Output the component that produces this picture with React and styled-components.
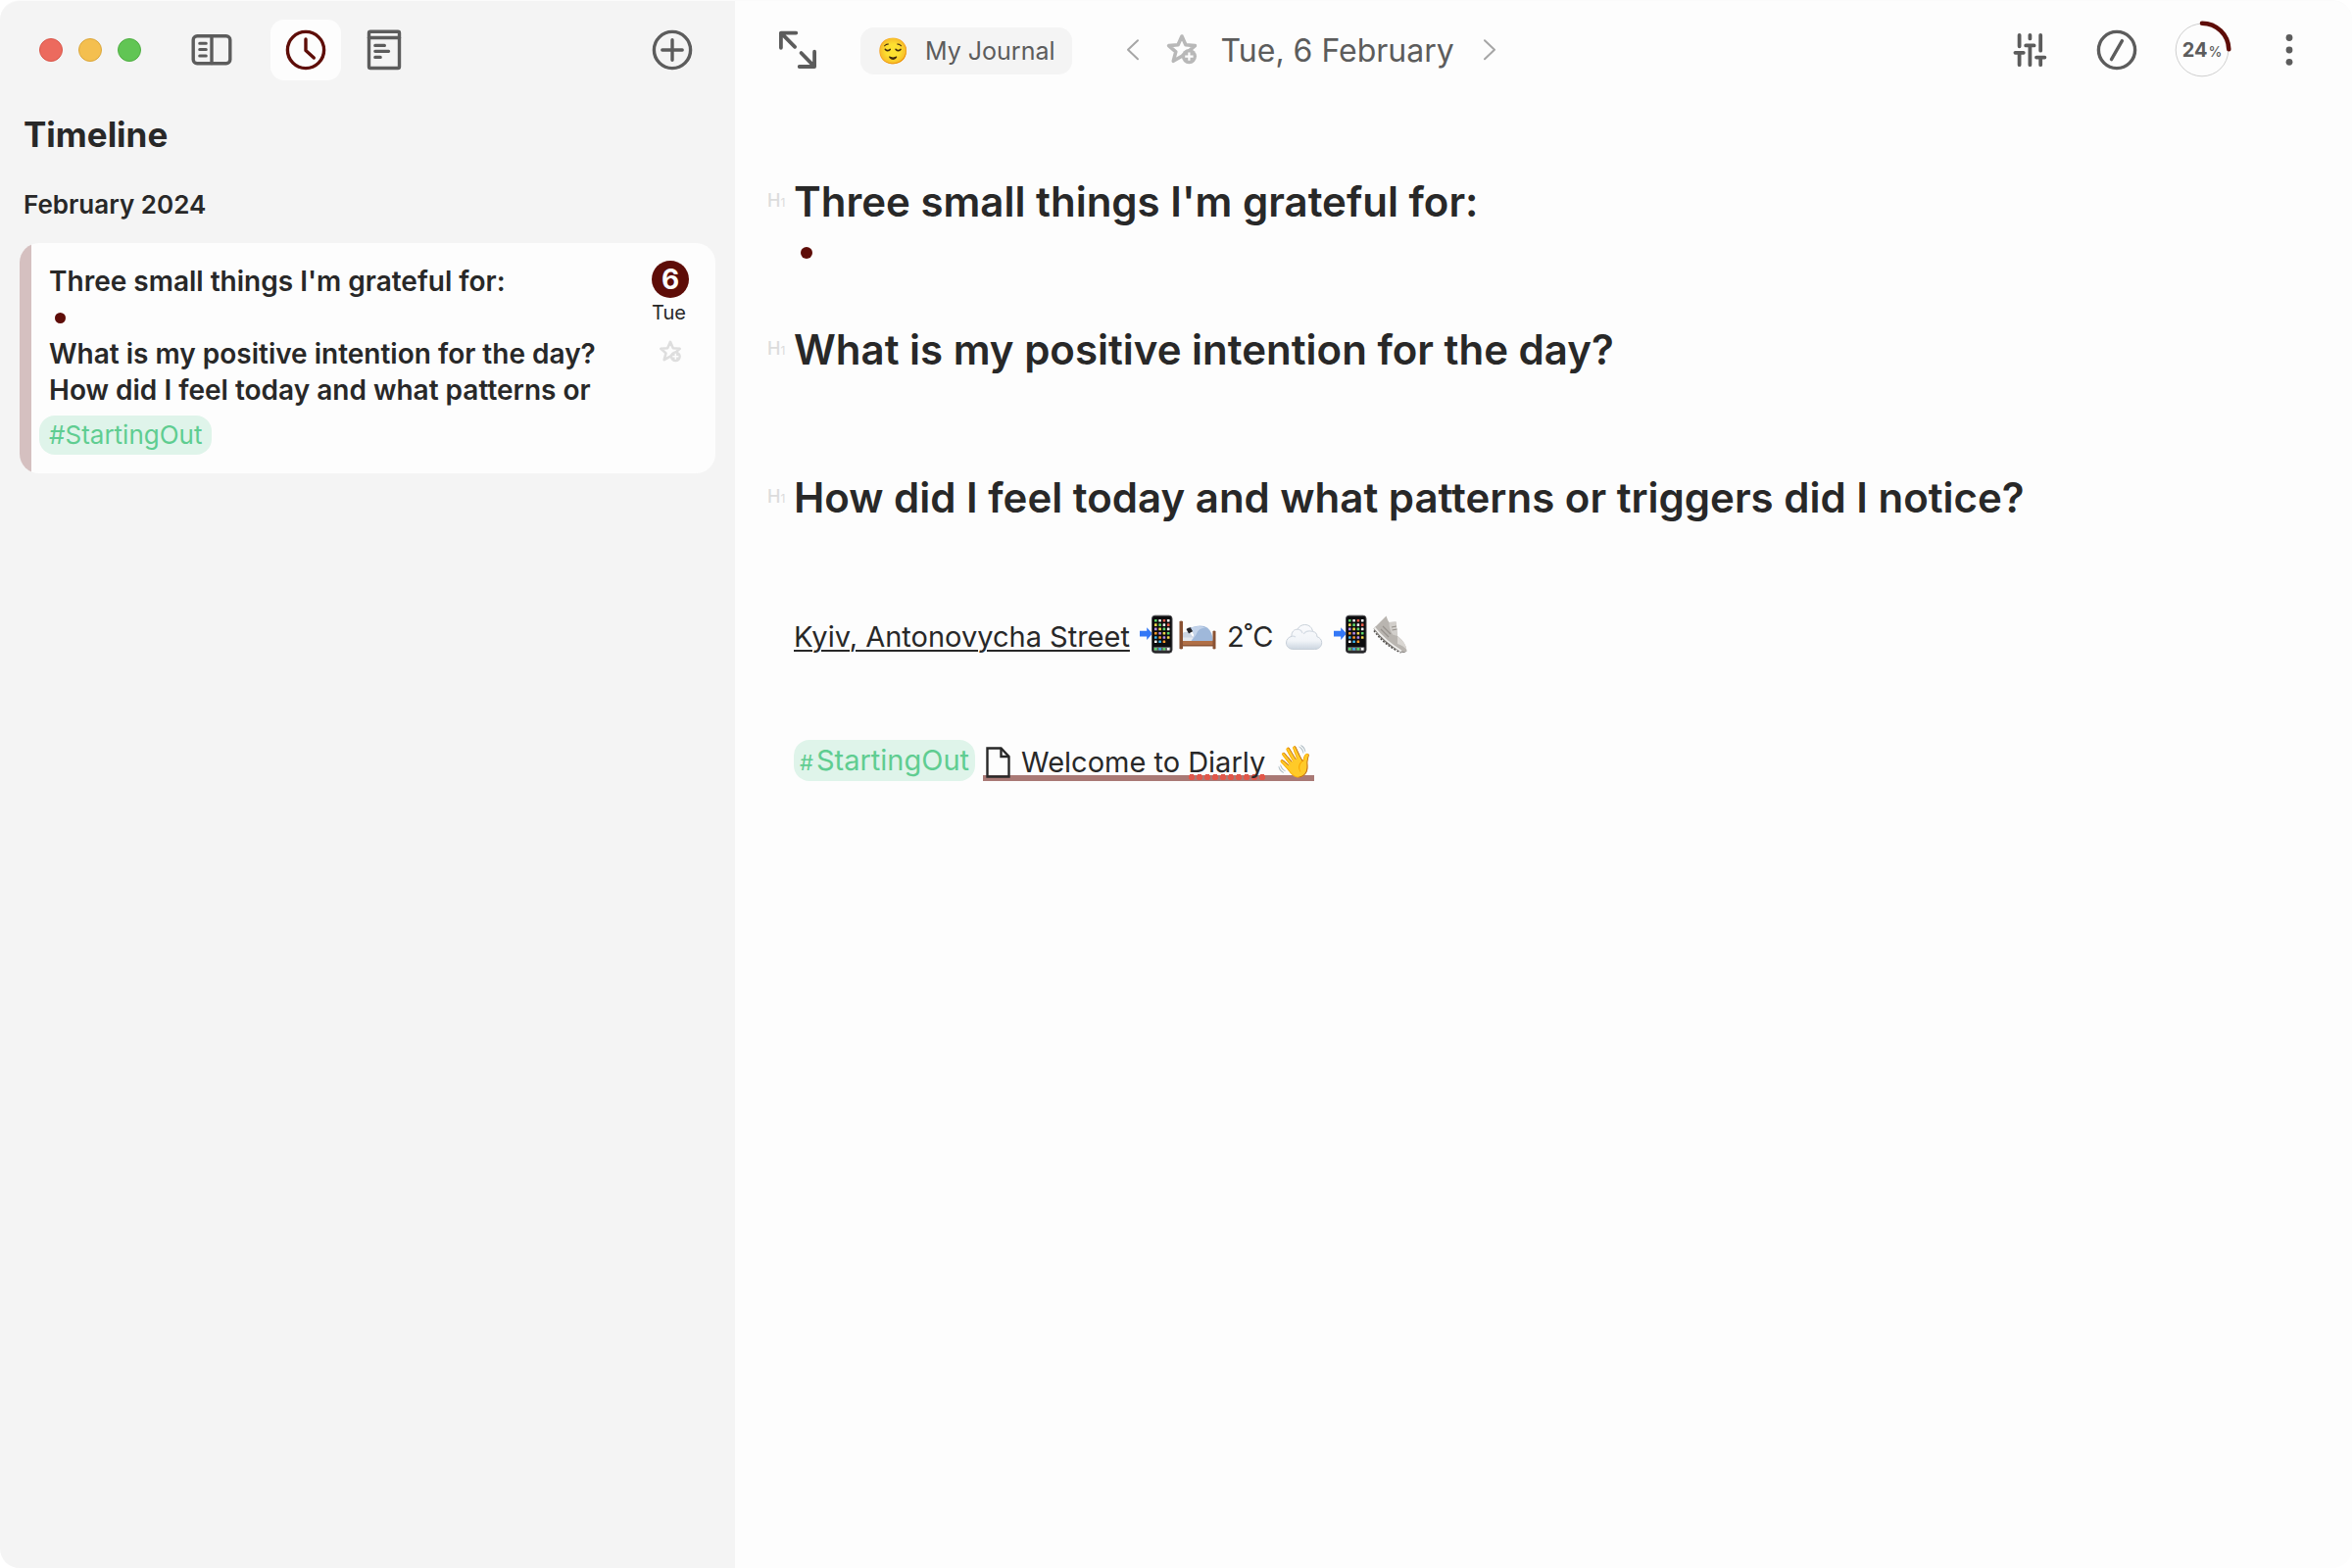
import React from "react";
import styled, { createGlobalStyle, ThemeProvider } from "styled-components";

const theme = {
  ink: "#282828",
  muted: "#5c5c5c",
  accent: "#5e0d08",
  accentSoft: "#d5c0c0",
  green: "#5fcd91",
  greenSoft: "#dff4ea",
  side: "#f4f4f4",
  paper: "#fdfdfd",
};

const GlobalStyle = createGlobalStyle`
  * { box-sizing: border-box; }
  body {
    margin: 0;
    background: #fff;
    font-family: Inter, "Liberation Sans", sans-serif;
    -webkit-font-smoothing: antialiased;
  }
  h1, h2, p { margin: 0; padding: 0; }
`;

const Window = styled.div`
  display: grid;
  grid-template-columns: 750px minmax(0, 1fr);
  min-height: 100vh;
  border-top: 1px solid #fbfbfb;
  border-radius: 20px;
  overflow: hidden;
  color: ${(p) => p.theme.ink};
  background: ${(p) => p.theme.paper};
`;

const Sidebar = styled.aside`
  background: ${(p) => p.theme.side};
`;

const Toolbar = styled.header`
  display: flex;
  align-items: center;
  height: 100px;
`;

const SideToolbar = styled(Toolbar)`
  padding: 0 43px 0 40px;
`;

const MainToolbar = styled(Toolbar)`
  padding: 0 52px 0 43px;
`;

const Spacer = styled.div`
  flex: 1;
`;

const Lights = styled.div`
  display: flex;
  gap: 16px;
  margin-right: 51px;
`;

const Light = styled.button`
  width: 24px;
  height: 24px;
  padding: 0;
  border: 1px solid ${(p) => p.$edge};
  border-radius: 50%;
  background: ${(p) => p.$fill};
`;

const IconButton = styled.button`
  display: flex;
  flex: none;
  padding: 0;
  border: 0;
  background: none;
  color: ${(p) => p.$color || p.theme.muted};
`;

const Tabs = styled.nav`
  display: flex;
  align-items: center;
  gap: 23px;
  margin-left: 39px;
`;

const TabButton = styled(IconButton)`
  align-items: center;
  justify-content: center;
  ${(p) =>
    p.$active &&
    `width: 72px; height: 62px; border-radius: 14px; background: ${p.theme.paper}; color: ${p.theme.accent};`}
`;

const Timeline = styled.section`
  padding: 14px 20px;
`;

const TimelineTitle = styled.h1`
  padding-left: 4px;
  font-size: 35px;
  font-weight: 700;
  line-height: 44px;
`;

const Month = styled.h2`
  margin: 32px 0 21px;
  padding-left: 4px;
  font-size: 26px;
  font-weight: 600;
  line-height: 36px;
`;

const Card = styled.article`
  display: flex;
  justify-content: space-between;
  padding: 18px 27px 19px 8px;
  border-radius: 20px;
  background: linear-gradient(
    to right,
    ${(p) => p.theme.accentSoft} 12px,
    ${(p) => p.theme.paper} 12px
  );
`;

const CardBody = styled.div`
  padding: 3px 0 0 12px;
`;

const Preview = styled.div`
  padding-left: 10px;
  font-size: 28px;
  font-weight: 600;
  line-height: 37px;
`;

const Bullet = styled.div`
  display: flex;
  align-items: center;
  height: ${(p) => p.$height}px;
  padding-left: ${(p) => p.$indent}px;

  &::before {
    content: "";
    width: ${(p) => p.$size}px;
    height: ${(p) => p.$size}px;
    border-radius: 50%;
    background: ${(p) => p.theme.accent};
  }
`;

const CardTag = styled.a`
  display: inline-block;
  margin-top: 7px;
  padding: 0 10px;
  border-radius: 16px;
  background: ${(p) => p.theme.greenSoft};
  color: ${(p) => p.theme.green};
  font-size: 26px;
  font-weight: 400;
  line-height: 40px;
  text-decoration: none;
`;

const CardDate = styled.div`
  display: flex;
  flex-direction: column;
  align-items: center;
  width: 38px;
`;

const DayBadge = styled.span`
  width: 38px;
  height: 38px;
  border-radius: 50%;
  background: ${(p) => p.theme.accent};
  color: #fff;
  font-size: 28px;
  font-weight: 700;
  line-height: 38px;
  text-align: center;
`;

const Weekday = styled.span`
  align-self: flex-start;
  margin: 2px 0 14px;
  font-size: 20px;
  line-height: 26px;
`;

const JournalButton = styled.button`
  display: flex;
  align-items: center;
  gap: 16px;
  height: 48px;
  margin: 2px 50px 0 43px;
  padding: 0 17px 0 18px;
  border: 0;
  border-radius: 14px;
  background: ${(p) => p.theme.side};
  color: ${(p) => p.theme.muted};
  font: 400 25px/48px Inter, "Liberation Sans", sans-serif;
`;

const Face = styled.span`
  display: flex;
  justify-content: center;
  width: 32px;
  font-family: "Noto Color Emoji", sans-serif;
  font-size: 26px;
  line-height: 48px;
`;

const DateNav = styled.div`
  display: flex;
  align-items: center;
`;

const DateTitle = styled.time`
  padding: 2px 24px 0 22px;
  color: ${(p) => p.theme.muted};
  font-size: 32px;
  line-height: 44px;
  white-space: nowrap;
`;

const FavouriteButton = styled(IconButton)`
  margin-left: 20px;
`;

const Actions = styled.div`
  display: flex;
  align-items: center;
  gap: 46px;
`;

const Progress = styled.button`
  position: relative;
  width: 60px;
  height: 60px;
  margin: 0 1px 0 -10px;
  padding: 0;
  border: 0;
  background: none;
`;

const ProgressText = styled.span`
  position: absolute;
  inset: 0;
  display: flex;
  align-items: baseline;
  justify-content: center;
  gap: 1px;
  color: ${(p) => p.theme.muted};
  font: 700 20px/60px Inter, "Liberation Sans", sans-serif;

  small {
    font-size: 14px;
    font-weight: 500;
  }
`;

const Editor = styled.main`
  padding: 77px 43px 77px 33px;
`;

const Section = styled.section`
  min-height: 151px;
`;

const HeadingRow = styled.div`
  display: grid;
  grid-template-columns: 27px minmax(0, 1fr);
  align-items: center;
`;

const Marker = styled.span`
  color: #dcdcdc;
  font-size: 18px;
  font-weight: 500;
  line-height: 24px;
  white-space: nowrap;

  small {
    font-size: 12px;
    font-weight: 400;
  }
`;

const Heading = styled.h2`
  font-size: 42px;
  font-weight: 600;
  line-height: 56px;
`;

const Line = styled.p`
  display: flex;
  align-items: center;
  height: 38px;
  padding-left: 27px;
  font-size: 29px;
  line-height: 38px;
  white-space: nowrap;
`;

const TagLine = styled(Line)`
  align-items: flex-end;
  gap: 8px;
  margin-top: 90px;
`;

const PlaceLink = styled.a`
  color: inherit;
  text-decoration: underline;
  text-decoration-thickness: 2px;
  text-underline-offset: 3px;
`;

const Emojis = styled.span`
  display: flex;
  gap: 2px;
  margin: 0 10px 0 7px;

  svg {
    margin-bottom: 6px;
  }
`;

const Weather = styled.span`
  display: flex;
  align-items: center;
  gap: 12px;
`;

const Tag = styled.a`
  display: flex;
  align-items: baseline;
  gap: 3px;
  padding: 2px 6px 0;
  border-radius: 16px;
  background: ${(p) => p.theme.greenSoft};
  color: ${(p) => p.theme.green};
  font-size: 29px;
  font-weight: 400;
  line-height: 38px;
  text-decoration: none;

  small {
    font-size: 22px;
  }
`;

const NoteLink = styled.a`
  display: flex;
  gap: 8px;
  padding: 0 0 0 3px;
  background: linear-gradient(#a97975, #a97975) left bottom / 100% 6px no-repeat;
  color: inherit;
  text-decoration: none;

  svg {
    margin: 3px 3px 0 0;
  }
`;

const Misspelled = styled.span`
  background: radial-gradient(circle at 4px 3px, #e0574a 3px, transparent 3px)
    left bottom 1px / 8px 6px repeat-x;
`;

const Wave = styled.span`
  margin-left: 2px;
  font-family: "Noto Color Emoji", sans-serif;
  font-size: 32px;
  line-height: 36px;
`;

const Glyph = ({ size = 42, width = 3.4, children }) => (
  <svg
    width={size}
    height="42"
    viewBox={`0 0 ${size} 42`}
    fill="none"
    stroke="currentColor"
    strokeWidth={width}
    strokeLinecap="round"
    strokeLinejoin="round"
    aria-hidden="true"
  >
    {children}
  </svg>
);

const PanelIcon = () => (
  <Glyph>
    <rect x="2.2" y="6.7" width="37.6" height="28" rx="4" />
    <path d="M21 7v27.5" />
    <path d="M8.7 14.3h6.6M8.7 20.6h6.6M8.7 26.9h6.6" strokeWidth="3" />
  </Glyph>
);

const ClockIcon = () => (
  <Glyph>
    <circle cx="21" cy="21" r="18.6" />
    <path d="M21 10v11.5l8.3 7.5" />
  </Glyph>
);

const NotebookIcon = () => (
  <Glyph>
    <rect x="5.5" y="2.2" width="31" height="37.3" rx="1.5" />
    <path d="M5.5 8.5h31" />
    <path d="M11.8 16.4h9.6M11.8 22.3h13.8M11.8 28.4h5.4" strokeWidth="3.2" />
  </Glyph>
);

const PlusIcon = () => (
  <Glyph>
    <circle cx="21" cy="21" r="18.6" />
    <path d="M21 10.8v20.4M10.8 21h20.4" />
  </Glyph>
);

const ExpandIcon = () => (
  <Glyph width={3.8}>
    <path d="M19.3 3.6H3.9V18.8M4.5 4.2l13.6 13.6" />
    <path d="M22.7 38h15.4V22.7M37.5 37.4L24.5 24" />
  </Glyph>
);

const SlidersIcon = () => (
  <Glyph width={3.8}>
    <path d="M9.6 5.8v11.5M5.4 23.8h8.4M9.6 24v12.2" />
    <path d="M20.4 5.8v3.6M16.2 16.4h8.4M20.4 17v19.2" />
    <path d="M31.2 5.8v15.9M27 28.6h8.4M31.2 29v7.2" />
  </Glyph>
);

const SlashIcon = () => (
  <Glyph>
    <circle cx="21" cy="21" r="18.6" />
    <path d="M26.4 11.6l-10.9 19" />
  </Glyph>
);

const DotsIcon = () => (
  <Glyph size={24}>
    <g fill="currentColor" stroke="none">
      <circle cx="12" cy="8.5" r="3.4" />
      <circle cx="12" cy="21" r="3.4" />
      <circle cx="12" cy="33.3" r="3.4" />
    </g>
  </Glyph>
);

const Chevron = ({ d }) => (
  <Glyph size={24} width={2}>
    <path d={d} />
  </Glyph>
);

const StarIcon = ({ size }) => (
  <svg width={size} height={size} viewBox="0 0 36 36" aria-hidden="true">
    <path
      d="M18 4l3.9 8.7 9.5.9-7.2 6.300L18 24.300l-8.700 5 2.500-9.400-7.200-6.300 9.500-.900z"
      fill="none"
      stroke="currentColor"
      strokeWidth="3.6"
      strokeLinejoin="round"
    />
    <circle cx="25.4" cy="24.6" r="7.6" fill="currentColor" />
    <path d="M25.4 20.4v8.4M21.2 24.6h8.4" stroke="#fdfdfd" strokeWidth="2.2" />
  </svg>
);

const RingArt = () => (
  <svg width="60" height="60" viewBox="0 0 60 60" fill="none" aria-hidden="true">
    <circle cx="30" cy="30" r="26.8" stroke="#cfcfcf" strokeWidth="1" />
    <path
      d="M30 2.7A27.3 27.3 0 0 1 57.3 29.3"
      stroke={theme.accent}
      strokeWidth="4.6"
      strokeLinecap="round"
    />
  </svg>
);

const DocIcon = () => (
  <svg
    width="25"
    height="32"
    viewBox="0 0 25 32"
    fill="none"
    stroke="currentColor"
    strokeWidth="2.4"
    aria-hidden="true"
  >
    <path d="M1.5 1.5h14l8 8.500v20.500h-22z" />
    <path d="M15.5 1.5V10h8" />
  </svg>
);

const appColors = ["#5fd66a", "#fff", "#b48be6", "#f2f2f2", "#3fb7f0", "#f5d84c", "#e85d4a", "#ff9d2e"];

const PhoneArt = () => (
  <svg width="40" height="40" viewBox="0 0 40 40" role="img" aria-label="mobile phone with arrow">
    <path d="M3 16.8h7.2v-3.6L16 19.6l-5.8 6.4v-3.6H3z" fill="#3478f6" />
    <rect x="15.5" y="1.2" width="20.5" height="38" rx="3" fill="#0c0c0e" stroke="#4a4a4e" strokeWidth="1" />
    {[0, 1, 2, 3, 4, 5].map((r) =>
      [0, 1, 2, 3].map((c) =>
        r === 5 && c > 2 ? null : (
          <rect
            key={`${r}-${c}`}
            x={18 + c * 4.3}
            y={5 + r * 4.3}
            width="2.6"
            height="2.6"
            rx=".5"
            fill={appColors[(r * 5 + c * 3) % 8]}
          />
        )
      )
    )}
    <rect x="17" y="33" width="17.5" height="4.5" rx="1" fill="#5c5c60" />
    {["#5fd66a", "#3fb7f0", "#5fd66a", "#fff"].map((f, c) => (
      <rect key={c} x={18 + c * 4.3} y="34" width="2.6" height="2.6" rx=".5" fill={f} />
    ))}
  </svg>
);

const BedArt = () => (
  <svg width="40" height="40" viewBox="0 0 40 40" role="img" aria-label="bed">
    <path d="M4.5 26.5H36v5.500H4.500z" fill="#b06f46" />
    <path d="M4.5 31H36v1.500H4.500z" fill="#8a5233" />
    <path d="M4.5 22.500H16v4.500H4.500z" fill="#e4e9f0" />
    <path d="M4.5 19q4-2.500 8 0l3 4.500h-11z" fill="#cdd6e4" />
    <path d="M8.5 15q2.500-2.500 6-1.500l1 3.500-4.500 2.500z" fill="#25252b" />
    <path d="M13 13.500q11-4 17 0 5.500 4.500 5.700 13.500H13.500q5.500-5.500-.500-13.500z" fill="#9fb8da" />
    <path d="M13 13.500q9-3 15 0-6 .500-8 4-1.500 4-6.500 9.500 5.500-5.500-.500-13.500z" fill="#c3d3ea" />
    <path d="M1.500 7q1.700-1 3.500 0v28q-1.700.8-3.500 0z" fill="#8a5233" />
    <path d="M35.500 17q1.500-.8 3 0v18q-1.500.8-3 0z" fill="#8a5233" />
  </svg>
);

const CloudArt = () => (
  <svg width="40" height="40" viewBox="0 0 40 40" role="img" aria-label="cloud">
    <defs>
      <linearGradient id="cloud" x1="0" y1="0" x2="0" y2="1">
        <stop offset="0" stopColor="#fafbfd" />
        <stop offset=".65" stopColor="#f1f4f8" />
        <stop offset="1" stopColor="#ccd6e0" />
      </linearGradient>
    </defs>
    <path
      d="M9 32.5C4.500 32.500 1.500 29.800 1.500 26c0-3.600 2.400-6 5.500-6.600C6.600 15 9.500 12 13 12.200 14.500 9 17.400 7.500 20.500 7.500c4.500 0 7.500 3 8 7 3 .2 4.600 2.500 4.400 5.200 3 .8 4.800 3.300 4.800 6 0 4-3 6.800-7.200 6.800z"
      fill="url(#cloud)"
      stroke="#c8d0d9"
      strokeWidth="1"
    />
    <path
      d="M13 12.200q4 .3 5 3.800M19 17q3.500-4.500 9.500-2.500M7 19.400q2-.6 4 .6"
      fill="none"
      stroke="#d6dde5"
      strokeWidth="1.2"
    />
  </svg>
);

const ShoeArt = () => (
  <svg width="40" height="40" viewBox="0 0 40 40" role="img" aria-label="running shoe">
    <path d="M1.500 14.500l3-2.500 31 25q-2 2.800-5.500 1.500Q12 31 1.500 14.500z" fill="#77736f" />
    <path
      d="M2.500 13.500L14.500 1.500q1.500 5 3 6.500l7-.5 1.500 14.500q9 7 9.500 15.500-3 1.500-5.500 0Q11 27.500 2.500 13.500z"
      fill="#b9b5b0"
    />
    <path d="M17.500 8l7-.5 1.500 14.500-5-1.500q-4-6-3.500-12.500z" fill="#d2cfcb" />
    <path d="M26 22q8.500 6.500 9.500 14-4-4.500-9.500-6z" fill="#d9d6d2" />
    <path d="M2.500 13.500Q13 27 30 37.500" fill="none" stroke="#f0efed" strokeWidth="2" />
    <path d="M2 16.500Q12 31 29.500 39" fill="none" stroke="#4c4946" strokeWidth="1.4" strokeDasharray="2 1.5" />
    <path d="M11 12l8 8M9 15l8 8M20 13l5-1M20.500 16l5-1" stroke="#97928d" strokeWidth="1.2" />
  </svg>
);

const EntryHeading = ({ children }) => (
  <HeadingRow>
    <Marker aria-hidden="true">
      H<small>1</small>
    </Marker>
    <Heading>{children}</Heading>
  </HeadingRow>
);

export default function App() {
  return (
    <ThemeProvider theme={theme}>
      <GlobalStyle />
      <Window>
        <Sidebar>
          <SideToolbar>
            <Lights>
              <Light type="button" aria-label="Close" $fill="#ec6a5e" $edge="#d9574b" />
              <Light type="button" aria-label="Minimize" $fill="#f4bf4f" $edge="#dba73c" />
              <Light type="button" aria-label="Zoom" $fill="#61c554" $edge="#4fae42" />
            </Lights>
            <IconButton type="button" aria-label="Toggle sidebar">
              <PanelIcon />
            </IconButton>
            <Tabs>
              <TabButton type="button" aria-label="Timeline" $active>
                <ClockIcon />
              </TabButton>
              <TabButton type="button" aria-label="Notes">
                <NotebookIcon />
              </TabButton>
            </Tabs>
            <Spacer />
            <IconButton type="button" aria-label="New entry">
              <PlusIcon />
            </IconButton>
          </SideToolbar>
          <Timeline>
            <TimelineTitle>Timeline</TimelineTitle>
            <Month>February 2024</Month>
            <Card>
              <CardBody>
                <Preview>
                  <p>Three small things I'm grateful for:</p>
                  <Bullet $height={37} $indent={6} $size={11} />
                  <p>What is my positive intention for the day?</p>
                  <p>How did I feel today and what patterns or</p>
                </Preview>
                <CardTag href="#StartingOut">#StartingOut</CardTag>
              </CardBody>
              <CardDate>
                <DayBadge>6</DayBadge>
                <Weekday>Tue</Weekday>
                <IconButton type="button" aria-label="Add to favourites" $color="#dedede">
                  <StarIcon size={26} />
                </IconButton>
              </CardDate>
            </Card>
          </Timeline>
        </Sidebar>
        <div>
          <MainToolbar>
            <IconButton type="button" aria-label="Expand">
              <ExpandIcon />
            </IconButton>
            <JournalButton type="button">
              <Face>😌</Face>
              My Journal
            </JournalButton>
            <DateNav>
              <IconButton type="button" aria-label="Previous day" $color="#a6a6a6">
                <Chevron d="M17 11.300L7 20.800l10 9.500" />
              </IconButton>
              <FavouriteButton type="button" aria-label="Add to favourites" $color="#b8b8b8">
                <StarIcon size={36} />
              </FavouriteButton>
              <DateTitle dateTime="2024-02-06">Tue, 6 February</DateTitle>
              <IconButton type="button" aria-label="Next day" $color="#a6a6a6">
                <Chevron d="M7 11.300l10 9.500-10 9.500" />
              </IconButton>
            </DateNav>
            <Spacer />
            <Actions>
              <IconButton type="button" aria-label="Adjust">
                <SlidersIcon />
              </IconButton>
              <IconButton type="button" aria-label="Commands">
                <SlashIcon />
              </IconButton>
              <Progress type="button">
                <RingArt />
                <ProgressText>
                  24<small>%</small>
                </ProgressText>
              </Progress>
              <IconButton type="button" aria-label="More">
                <DotsIcon />
              </IconButton>
            </Actions>
          </MainToolbar>
          <Editor>
            <Section>
              <EntryHeading>Three small things I'm grateful for:</EntryHeading>
              <Bullet $height={48} $indent={34} $size={12} />
            </Section>
            <Section>
              <EntryHeading>What is my positive intention for the day?</EntryHeading>
            </Section>
            <Section>
              <EntryHeading>How did I feel today and what patterns or triggers did I notice?</EntryHeading>
            </Section>
            <Line>
              <PlaceLink href="#place">Kyiv, Antonovycha Street</PlaceLink>
              <Emojis>
                <PhoneArt />
                <BedArt />
              </Emojis>
              <Weather>
                2˚C
                <CloudArt />
              </Weather>
              <Emojis>
                <PhoneArt />
                <ShoeArt />
              </Emojis>
            </Line>
            <TagLine>
              <Tag href="#StartingOut">
                <small>#</small>StartingOut
              </Tag>
              <NoteLink href="#welcome">
                <DocIcon />
                <span>Welcome to</span>
                <Misspelled>Diarly</Misspelled>
                <Wave>👋</Wave>
              </NoteLink>
            </TagLine>
          </Editor>
        </div>
      </Window>
    </ThemeProvider>
  );
}
